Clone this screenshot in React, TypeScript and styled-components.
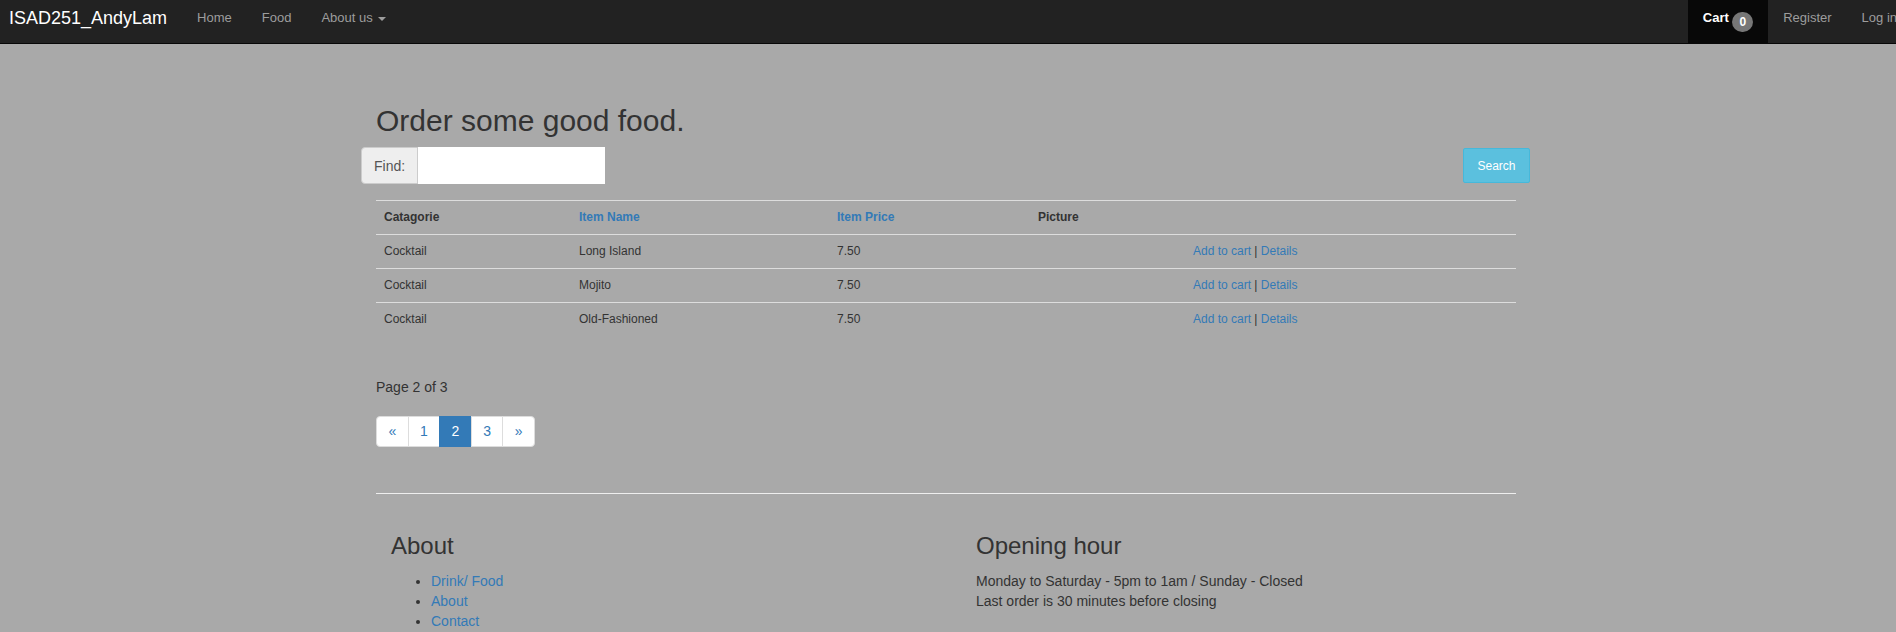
import React from 'react';
import styled, { createGlobalStyle } from 'styled-components';

const GlobalStyle = createGlobalStyle`
  html, body {
    margin: 0;
    padding: 0;
    overflow: hidden;
  }

  body {
    background: #a9a9a9;
    color: #333;
    font-family: "Liberation Sans", Arial, Helvetica, sans-serif;
    font-size: 14px;
    line-height: 20px;
  }

  * {
    box-sizing: border-box;
  }
`;

const Navbar = styled.nav`
  display: flex;
  justify-content: space-between;
  height: 44px;
  background: #222;
  border-bottom: 1px solid #080808;
`;

const NavGroup = styled.div<{ $right?: boolean }>`
  display: flex;
  margin-right: ${(p) => (p.$right ? '-16px' : '0')};
`;

const Brand = styled.a`
  padding: 8px 15px 0 9px;
  font-size: 18px;
  line-height: 20px;
  color: #fff;
  text-decoration: none;
  white-space: nowrap;
`;

const NavLink = styled.a<{ $active?: boolean }>`
  display: block;
  height: 43px;
  padding: 8px 15px 0;
  font-size: 13px;
  line-height: 20px;
  white-space: nowrap;
  text-decoration: none;
  color: ${(p) => (p.$active ? '#fff' : '#9d9d9d')};
  font-weight: ${(p) => (p.$active ? 'bold' : 'normal')};
  background: ${(p) => (p.$active ? '#080808' : 'transparent')};
`;

const Caret = styled.span`
  display: inline-block;
  width: 0;
  height: 0;
  margin-left: 2px;
  vertical-align: middle;
  border-top: 4px solid #9d9d9d;
  border-left: 4px solid transparent;
  border-right: 4px solid transparent;
`;

const Badge = styled.span`
  display: inline-block;
  position: relative;
  top: 3px;
  min-width: 10px;
  padding: 4px 7px;
  font-size: 12px;
  font-weight: bold;
  line-height: 1;
  color: #fff;
  text-align: center;
  vertical-align: middle;
  background: #777;
  border-radius: 10px;
`;

const Container = styled.main`
  width: 1140px;
  margin-left: calc((100% - 1144px) / 2);
`;

const Title = styled.h2`
  margin: 60px 0 10px;
  font-size: 30px;
  line-height: 33px;
  font-weight: normal;
`;

const SearchRow = styled.form`
  display: flex;
  justify-content: space-between;
  align-items: center;
  margin: 0 -14px 0 -15px;
  height: 37px;
`;

const InputGroup = styled.div`
  display: flex;
  height: 37px;
`;

const Addon = styled.span`
  display: flex;
  align-items: center;
  padding: 0 12px;
  font-size: 14px;
  color: #555;
  background: #eee;
  border: 1px solid #ccc;
  border-radius: 4px 0 0 4px;
`;

const FindInput = styled.input`
  width: 187px;
  height: 37px;
  border: none;
  background: #fff;
  padding: 0 12px;
  font: inherit;
  outline: none;
`;

const SearchButton = styled.button`
  width: 67px;
  height: 35px;
  padding: 0;
  font-family: inherit;
  font-size: 12px;
  color: #fff;
  background: #5bc0de;
  border: 1px solid #46b8da;
  border-radius: 2px;
`;

const Table = styled.table`
  width: 100%;
  margin-top: 16px;
  border-collapse: collapse;
  table-layout: fixed;
  font-size: 12px;
`;

const Cell = styled.td`
  padding: 8px;
  line-height: 17px;
  border-top: 1px solid #ddd;
  text-align: left;
  white-space: nowrap;
`;

const HeadCell = styled(Cell).attrs({ as: 'th' })`
  font-weight: bold;
`;

const Link = styled.a`
  color: #337ab7;
  text-decoration: none;
`;

const PageInfo = styled.div`
  margin-top: 41px;
  line-height: 20px;
`;

const Pagination = styled.ul`
  display: flex;
  margin: 19px 0 0;
  padding: 0;
  list-style: none;
`;

const PageItem = styled.li<{ $active?: boolean }>`
  margin-left: -1px;
  padding: 5px 0;
  width: 32.6px;
  text-align: center;
  line-height: 19px;
  color: ${(p) => (p.$active ? '#fff' : '#337ab7')};
  background: ${(p) => (p.$active ? '#337ab7' : '#fff')};
  border: 1px solid ${(p) => (p.$active ? '#337ab7' : '#ddd')};

  &:first-child {
    margin-left: 0;
    border-radius: 4px 0 0 4px;
  }

  &:last-child {
    border-radius: 0 4px 4px 0;
  }
`;

const Rule = styled.hr`
  margin: 46px 0 0;
  border: 0;
  border-top: 1px solid #eee;
`;

const Footer = styled.footer`
  display: grid;
  grid-template-columns: 585px 585px;
`;

const FooterCol = styled.section`
  padding: 0 15px;
`;

const FooterTitle = styled.h3`
  margin: 39px 0 12px;
  font-size: 24px;
  line-height: 26px;
  font-weight: normal;
`;

const FooterList = styled.ul`
  margin: 0;
  padding-left: 40px;
`;

const FooterText = styled.p`
  margin: 0;
`;

const items = [
  { category: 'Cocktail', name: 'Long Island', price: '7.50' },
  { category: 'Cocktail', name: 'Mojito', price: '7.50' },
  { category: 'Cocktail', name: 'Old-Fashioned', price: '7.50' },
];

const columnWidths = [195, 258, 201, 155];

const App: React.FC = () => {
  return (
    <>
      <GlobalStyle />
      <Navbar>
        <NavGroup>
          <Brand href="#">ISAD251_AndyLam</Brand>
          <NavLink href="#">Home</NavLink>
          <NavLink href="#">Food</NavLink>
          <NavLink href="#">
            About us <Caret />
          </NavLink>
        </NavGroup>
        <NavGroup $right>
          <NavLink href="#" $active>
            Cart <Badge>0</Badge>
          </NavLink>
          <NavLink href="#">Register</NavLink>
          <NavLink href="#">Log in</NavLink>
        </NavGroup>
      </Navbar>

      <Container>
        <Title>Order some good food.</Title>
        <SearchRow onSubmit={(e) => e.preventDefault()}>
          <InputGroup>
            <Addon>Find:</Addon>
            <FindInput type="text" />
          </InputGroup>
          <SearchButton type="submit">Search</SearchButton>
        </SearchRow>

        <Table>
          <colgroup>
            {columnWidths.map((w, i) => (
              <col key={i} style={{ width: w }} />
            ))}
            <col />
          </colgroup>
          <thead>
            <tr>
              <HeadCell>Catagorie</HeadCell>
              <HeadCell>
                <Link href="#">Item Name</Link>
              </HeadCell>
              <HeadCell>
                <Link href="#">Item Price</Link>
              </HeadCell>
              <HeadCell>Picture</HeadCell>
              <HeadCell />
            </tr>
          </thead>
          <tbody>
            {items.map((item) => (
              <tr key={item.name}>
                <Cell>{item.category}</Cell>
                <Cell>{item.name}</Cell>
                <Cell>{item.price}</Cell>
                <Cell />
                <Cell>
                  <Link href="#">Add to cart</Link> | <Link href="#">Details</Link>
                </Cell>
              </tr>
            ))}
          </tbody>
        </Table>

        <PageInfo>Page 2 of 3</PageInfo>
        <Pagination>
          <PageItem>«</PageItem>
          <PageItem>1</PageItem>
          <PageItem $active>2</PageItem>
          <PageItem>3</PageItem>
          <PageItem>»</PageItem>
        </Pagination>

        <Rule />

        <Footer>
          <FooterCol>
            <FooterTitle>About</FooterTitle>
            <FooterList>
              <li>
                <Link href="#">Drink/ Food</Link>
              </li>
              <li>
                <Link href="#">About</Link>
              </li>
              <li>
                <Link href="#">Contact</Link>
              </li>
            </FooterList>
          </FooterCol>
          <FooterCol>
            <FooterTitle>Opening hour</FooterTitle>
            <FooterText>Monday to Saturday - 5pm to 1am / Sunday - Closed</FooterText>
            <FooterText>Last order is 30 minutes before closing</FooterText>
          </FooterCol>
        </Footer>
      </Container>
    </>
  );
};

export default App;
